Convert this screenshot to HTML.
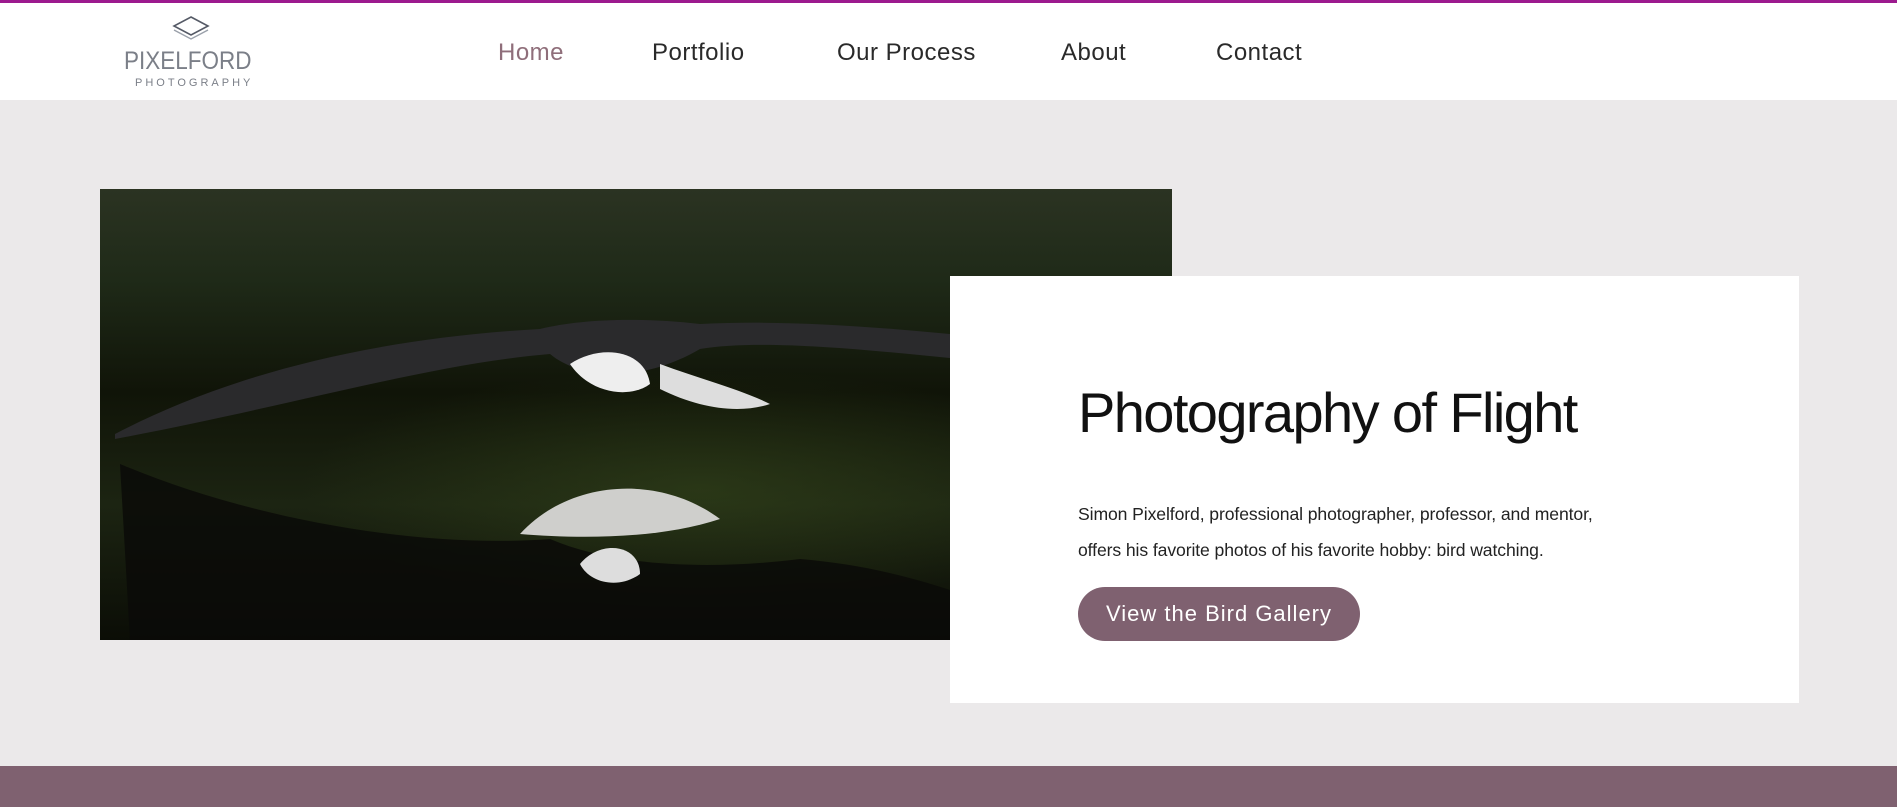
<!DOCTYPE html>
<html><head><meta charset="utf-8"><style>
*{margin:0;padding:0;box-sizing:border-box}
body{width:1897px;height:807px;overflow:hidden;background:#ebe9ea;font-family:"Liberation Sans",sans-serif;position:relative}
.top{position:absolute;left:0;top:0;width:1897px;height:3px;background:#9c1a8e}
.hdr{position:absolute;left:0;top:3px;width:1897px;height:97px;background:#fff}
.nav a{position:absolute;top:36px;font-size:24px;color:#2a2a2a;text-decoration:none;letter-spacing:0.5px;font-weight:300}
.logo1{position:absolute;left:124px;top:44px;font-size:25px;color:#7b7f88;letter-spacing:0px;font-weight:300;transform:scaleX(0.9);transform-origin:left}
.logo2{position:absolute;left:135px;top:74px;font-size:11px;color:#7b7f88;letter-spacing:3px}
.img{position:absolute;left:100px;top:189px;width:1072px;height:451px;background:
radial-gradient(ellipse 400px 120px at 600px 300px,rgba(60,80,30,.45),transparent),
linear-gradient(180deg,#2b3322 0%,#1f2a18 20%,#101408 45%,#1c2412 70%,#0b0d06 100%);overflow:hidden}
.card{position:absolute;left:950px;top:276px;width:849px;height:427px;background:#fff}
h1{position:absolute;left:1078px;top:380px;font-size:56px;font-weight:400;color:#111;letter-spacing:-1.6px}
p{position:absolute;left:1078px;top:496px;font-size:17.6px;line-height:36px;color:#222;letter-spacing:-0.1px}
.btn{position:absolute;left:1078px;top:587px;width:282px;height:54px;border-radius:27px;background:#7f6170;color:#fff;font-size:22px;line-height:54px;text-align:center;letter-spacing:1px}
.foot{position:absolute;left:0;top:766px;width:1897px;height:41px;background:#7f6170}
</style></head><body>
<div class="top"></div>
<div class="hdr">
<svg style="position:absolute;left:168px;top:12px" width="46" height="30" viewBox="0 0 46 30"><path d="M23 2 L40 11 L23 20 L6 11Z" fill="none" stroke="#555a66" stroke-width="1.6"/><path d="M6 15 L23 24 L40 15" fill="none" stroke="#9aa0aa" stroke-width="1.4"/></svg>
<div class="logo1">PIXELFORD</div>
<div class="logo2">PHOTOGRAPHY</div>
<div class="nav">
<a style="left:498px;color:#8f6e7a">Home</a>
<a style="left:652px">Portfolio</a>
<a style="left:837px">Our Process</a>
<a style="left:1061px">About</a>
<a style="left:1216px">Contact</a>
</div>
</div>
<div class="img">
<svg width="1072" height="451" viewBox="0 0 1072 451">
<path d="M15 245 C120 190 260 150 440 140 C480 130 540 128 600 135 C700 130 800 140 900 150 L860 170 C760 160 660 150 600 160 C540 195 480 190 450 165 C330 175 200 215 15 250Z" fill="#2a2a2c"/>
<path d="M470 175 C500 155 545 160 550 195 C530 210 490 205 470 175Z" fill="#eee"/>
<path d="M560 175 C600 190 640 200 670 215 C640 225 600 220 560 200Z" fill="#ddd"/>
<path d="M20 275 C150 330 320 360 450 350 C520 380 620 380 700 370 C820 380 900 420 980 451 L30 451Z" fill="#0a0a08" opacity=".85"/>
<path d="M420 345 C470 290 560 285 620 330 C560 350 480 350 420 345Z" fill="#cfcfcc"/>
<path d="M480 375 C500 350 540 355 540 385 C520 400 490 395 480 375Z" fill="#ddd"/>
</svg>
</div>
<div class="card"></div>
<h1>Photography of Flight</h1>
<p>Simon Pixelford, professional photographer, professor, and mentor,<br>offers his favorite photos of his favorite hobby: bird watching.</p>
<div class="btn">View the Bird Gallery</div>
<div class="foot"></div>
</body></html>
